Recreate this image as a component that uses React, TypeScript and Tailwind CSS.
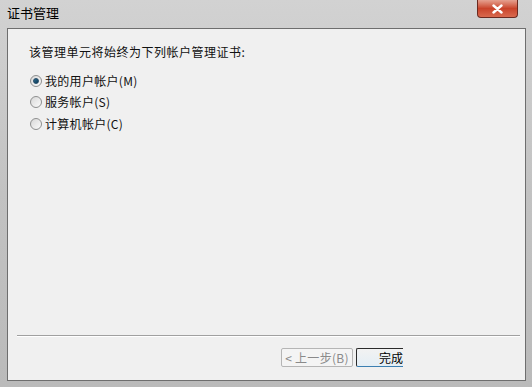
import React from "react";

const font = { fontFamily: '"Noto Sans CJK SC", "Liberation Sans", sans-serif' };

function Radio({ checked, label }: { checked?: boolean; label: string }) {
  return (
    <div className="flex items-center h-[21.5px]">
      <span className="w-[12px] h-[12px] rounded-full border border-[#8e8f8f] bg-gradient-to-br from-[#d8d8d8] to-[#fbfbfb] flex items-center justify-center">
        {checked && <span className="w-[6px] h-[6px] rounded-full bg-gradient-to-br from-[#2e6c8e] to-[#0b3a58] border border-[#224a66]" />}
      </span>
      <span className="ml-[3px] text-[12px] text-[#111] tracking-[0.3px]">{label}</span>
    </div>
  );
}

export default function App() {
  return (
    <div
      className="w-[532px] h-[387px] flex flex-col bg-gradient-to-b from-[#d2d2d2] via-[#c2c2c2] to-[#bababa] overflow-hidden"
      style={font}
    >
      {/* Title bar */}
      <div className="h-[28px] flex items-start justify-between pl-[7px] pr-[14px]">
        <span className="mt-[4px] text-[13px] text-[#000] leading-[18px]">证书管理</span>
        <button className="w-[41px] h-[18px] rounded-b-[4px] border border-[#6b2a20] border-t-0 bg-gradient-to-b from-[#e5a08f] via-[#c9432a] to-[#d9694e] flex items-center justify-center">
          <svg width="11" height="10" viewBox="0 0 11 10">
            <path d="M1.5 1.5 L9.5 8.5 M9.5 1.5 L1.5 8.5" stroke="#fff" strokeWidth="2.4" strokeLinecap="round" />
          </svg>
        </button>
      </div>

      {/* Body */}
      <div className="flex-1 ml-[7px] mr-[6px] mb-[6px] border border-[#6e6e6e] bg-[#f0f0f0] flex flex-col">
        <div className="pl-[21px] pt-[14px]">
          <p className="text-[12px] text-[#111] leading-[18px] tracking-[0.5px]">该管理单元将始终为下列帐户管理证书:</p>
          <div className="mt-[9px] pl-[1px]">
            <Radio checked label="我的用户帐户(M)" />
            <Radio label="服务帐户(S)" />
            <Radio label="计算机帐户(C)" />
          </div>
        </div>

        <div className="flex-1" />

        <div className="ml-[9px] mr-[5px] h-[2px] border-t border-[#a0a0a0] border-b border-b-white" />

        <div className="h-[43px] flex items-start pl-[273px] pt-[11px]">
          <button className="w-[72px] h-[19px] rounded-[2px] border border-[#b5b5b5] bg-[#f4f4f4] text-[12px] text-[#8a8a8a] leading-[17px] tracking-[0.3px]">
            &lt; 上一步(B)
          </button>
          <button className="ml-[3px] w-[47px] h-[19px] rounded-l-[2px] border border-r-0 border-[#3c7fb1] border-l-[#2a2a2a] border-t-[#2a2a2a] bg-gradient-to-b from-[#f2f2f2] to-[#e4eef5] text-[12px] text-[#000] leading-[17px] text-right overflow-hidden">
            完成
          </button>
        </div>
      </div>
    </div>
  );
}
